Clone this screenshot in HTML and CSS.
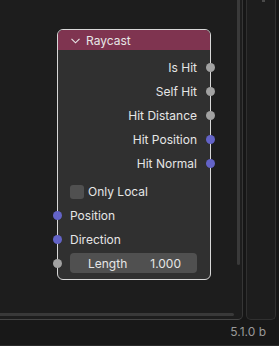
FILE: index.html
```html
<!DOCTYPE html>
<html lang="en">
<head>
    <meta charset="UTF-8">
    <meta name="viewport" content="width=device-width, initial-scale=1.0">
    <title>Raycast</title>
    <link rel="stylesheet" href="styles.css">
</head>
<body>
    <div class="screen">
        <div class="areas">
            <!-- node editor -->
            <div class="editor">
                <div class="vscroll"></div>
                <div class="hscroll"></div>
                <div class="node">
                    <div class="node-head">
                        <svg class="chevron" width="9" height="6" viewBox="0 0 9 6">
                            <path d="M0.5 0.8 L4.5 4.8 L8.5 0.8" fill="none" stroke="#e8e8e8" stroke-width="1.1"/>
                        </svg>
                        <span>Raycast</span>
                    </div>
                    <div class="node-body">
                        <div class="row out"><span>Is Hit</span><i class="sock gray"></i></div>
                        <div class="row out"><span>Self Hit</span><i class="sock gray"></i></div>
                        <div class="row out"><span>Hit Distance</span><i class="sock gray"></i></div>
                        <div class="row out"><span>Hit Position</span><i class="sock blue"></i></div>
                        <div class="row out"><span>Hit Normal</span><i class="sock blue"></i></div>
                        <div class="row check"><span class="box"></span><span>Only Local</span></div>
                        <div class="row in"><i class="sock blue"></i><span>Position</span></div>
                        <div class="row in"><i class="sock blue"></i><span>Direction</span></div>
                        <div class="row in">
                            <i class="sock gray"></i>
                            <div class="field"><span>Length</span><span>1.000</span></div>
                        </div>
                    </div>
                </div>
            </div>
            <div class="gap"></div>
            <!-- side area -->
            <div class="side"><span class="dot"></span></div>
            <div class="gap"></div>
        </div>
        <div class="status">
            <span>5.1.0 b</span>
        </div>
    </div>
</body>
</html>
```

FILE: styles.css
```css
* { margin: 0; padding: 0; box-sizing: border-box; }
body, html {
    width: 100%;
    height: 100%;
    background: #181818;
    font-family: Inter, "Noto Sans", sans-serif;
    color: #e6e6e6;
    overflow: hidden;
}
.screen {
    display: flex;
    flex-direction: column;
    height: 346px;
}
.areas {
    display: flex;
    height: 320px;
    background: #161616;
}
.editor {
    width: 244px;
    height: 320px;
    background: #1d1d1d;
    border-right: 1px solid #363636;
    border-bottom: 1px solid #454545;
    border-bottom-right-radius: 5px;
    position: relative;
}
.vscroll {
    position: absolute;
    right: 2px;
    top: 0;
    width: 3px;
    height: 265px;
    background: #3a3a3a;
    border-radius: 0 0 2px 2px;
}
.hscroll {
    position: absolute;
    left: 0;
    bottom: 3px;
    width: 234px;
    height: 3px;
    background: #393939;
    border-radius: 0 2px 2px 0;
}
.gap { width: 3px; }
.side {
    width: 30px;
    height: 320px;
    background: #1d1d1d;
    border: 1px solid #303030;
    border-top: none;
    border-radius: 0 0 5px 5px;
    position: relative;
}
.dot {
    position: absolute;
    left: 15px;
    top: 0;
    width: 3px;
    height: 2px;
    background: #4a4a4a;
}

/* node */
.node {
    position: absolute;
    left: 57px;
    top: 29px;
    width: 154px;
    height: 251px;
    border: 1px solid #d8d8d8;
    border-radius: 6px;
    background: #303030;
}
.node-head {
    height: 20px;
    background: #7f3450;
    border-radius: 5px 5px 0 0;
    display: flex;
    align-items: center;
    padding-left: 13px;
    gap: 6px;
    font-size: 12px;
}
.chevron { margin-top: 1px; }
.node-body {
    padding-top: 6px;
    font-size: 12px;
}
.row {
    height: 23.8px;
    display: flex;
    align-items: center;
    position: relative;
}
.row.out {
    justify-content: flex-end;
    padding-right: 13px;
}
.row.in, .row.check {
    padding-left: 12px;
}
.row.check {
    gap: 4px;
    margin-top: 5px;
}
.box {
    width: 14px;
    height: 14px;
    background: #505050;
    border-radius: 3px;
}
.sock {
    position: absolute;
    top: 50%;
    width: 9px;
    height: 9px;
    margin-top: -4.5px;
    border-radius: 50%;
}
.out .sock { right: -5px; }
.in .sock { left: -5px; }
.sock.gray { background: #a1a1a1; }
.sock.blue { background: #6363c7; }
.field {
    width: 127px;
    height: 20px;
    background: #505050;
    border-radius: 4px;
    display: flex;
    justify-content: space-between;
    align-items: center;
    padding: 0 16px 0 18px;
}

.status {
    flex: 1;
    display: flex;
    justify-content: flex-end;
    align-items: center;
    padding: 0 13px 2px 0;
    font-size: 12px;
    color: #9a9a9a;
    border-bottom: 1px solid #2a2a2a;
}
```
